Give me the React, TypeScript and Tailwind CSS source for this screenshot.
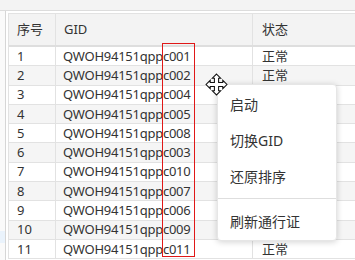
const gids = ['001', '002', '004', '005', '008', '003', '010', '007', '006', '009', '011'];

const menu = ['启动', '切换GID', '还原排序'];

export default function App() {
  return (
    <div className="relative h-[260px] w-[355px] overflow-hidden bg-white text-[#333] font-['Noto_Sans','Noto_Sans_CJK_SC',sans-serif]">
      <div className="h-[11px] border-b border-[#dcdcdc] bg-[#f3f3f3]" />
      <div className="flex">
        <div className="h-[249px] w-[6px] border-r border-[#d6d6d6] bg-[#fafafa] pt-[220px]">
          <div className="h-[12px] bg-[#eaf3fc]" />
        </div>
        <div className="flex-1 pl-[2px] pt-[2px]">
          <Tabla />
        </div>
      </div>

      {/* marco rojo sobre la columna GID */}
      <div className="absolute left-[162px] top-[43px] h-[214px] w-[33px] border border-[#e01818]" />

      <div className="absolute left-[217px] top-[84px] w-[120px] rounded-[4px] border border-[#e6e6e6] bg-white py-px shadow-[0_1px_6px_rgba(0,0,0,0.18)]">
        {menu.map((m) => (
          <div key={m} className="flex h-[36px] items-center pl-[12px] text-[14px] text-[#333]">{m}</div>
        ))}
        <div className="my-[4px] h-px bg-[#dedede]" />
        <div className="flex h-[36px] items-center pl-[12px] text-[14px] text-[#333]">刷新通行证</div>
      </div>

      <svg className="absolute left-[205px] top-[73px]" width="23" height="23" viewBox="0 0 22 22">
        <path
          d="M11 1 L15 5 L13 5 L13 9 L17 9 L17 7 L21 11 L17 15 L17 13 L13 13 L13 17 L15 17 L11 21 L7 17 L9 17 L9 13 L5 13 L5 15 L1 11 L5 7 L5 9 L9 9 L9 5 L7 5 Z"
          fill="#fff" stroke="#111" strokeWidth="1" strokeLinejoin="miter" />
      </svg>
    </div>
  );
}

function Tabla() {
  const cols = 'grid grid-cols-[47px_197px_1fr]';
  return (
    <div className="border-l border-t border-[#e2e2e2] text-[13px]">
      <div className={`${cols} h-[33px] border-b-2 border-[#dedede] bg-[#f3f3f3]`}>
        <div className="flex items-center border-r border-[#e2e2e2] px-[8px]">序号</div>
        <div className="flex items-center border-r border-[#e2e2e2] px-[8px]">GID</div>
        <div className="flex items-center px-[9px]">状态</div>
      </div>
      {gids.map((g, i) => (
        <div key={g} className={`${cols} h-[19.3px] border-b border-[#e2e2e2] ${i % 2 ? 'bg-[#f5f5f5]' : 'bg-white'}`}>
          <div className="flex items-center border-r border-[#e2e2e2] px-[8px] leading-none">{i + 1}</div>
          <div className="flex items-center border-r border-[#e2e2e2] px-[7px] leading-none tracking-[-0.25px]">QWOH94151qppc{g}</div>
          <div className="flex items-center px-[9px] leading-none">正常</div>
        </div>
      ))}
    </div>
  );
}
